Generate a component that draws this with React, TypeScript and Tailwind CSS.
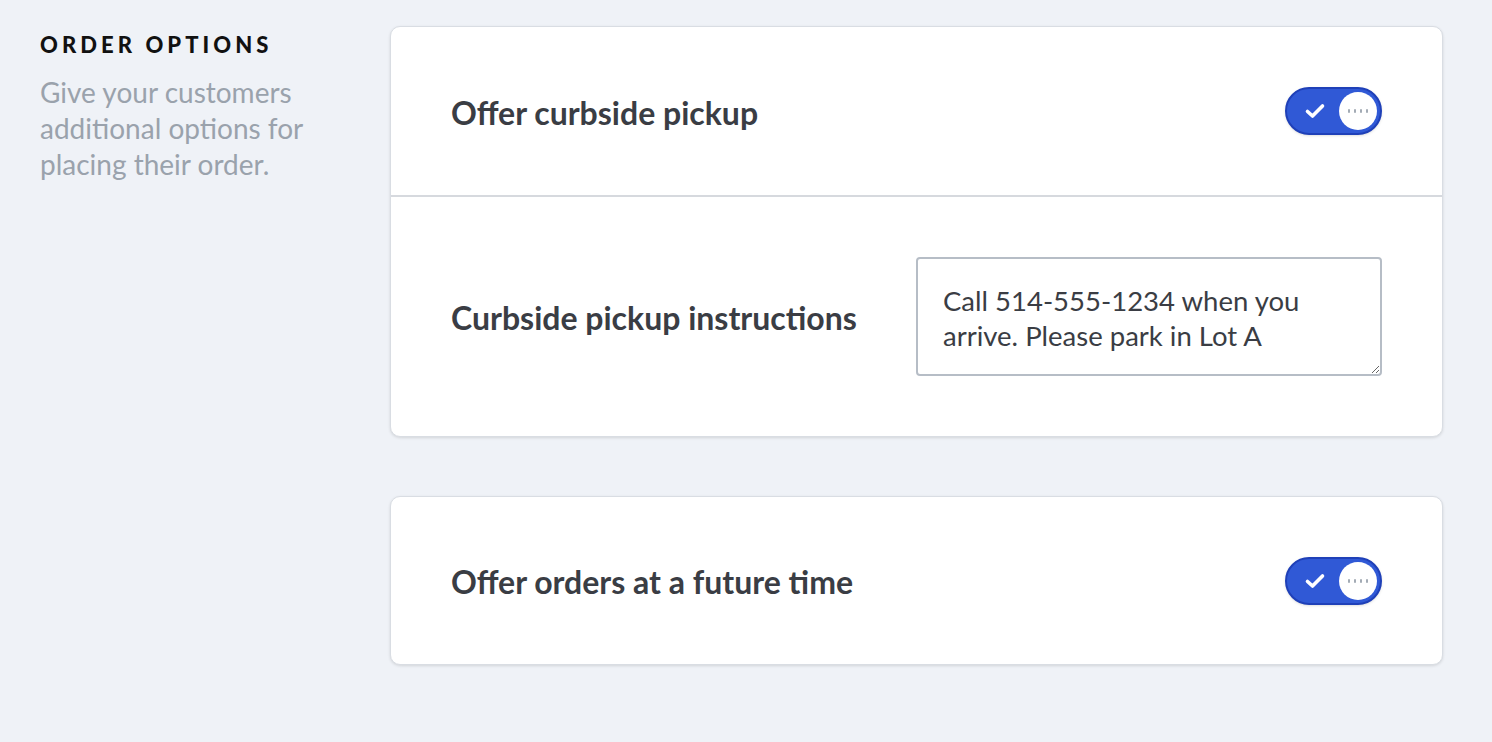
import React from "react"

function Toggle() {
  return (
    <button
      type="button"
      className="relative flex h-[48px] w-[97px] items-center rounded-full border-2 border-[#1f40b8] bg-[#3059d6] shadow-sm"
    >
      <svg
        className="absolute left-[17px] top-1/2 -translate-y-1/2"
        width="22"
        height="18"
        viewBox="0 0 22 18"
        fill="none"
      >
        <path
          d="M3.5 9.5l5 4.5L18.5 4"
          stroke="white"
          strokeWidth="3.6"
          strokeLinecap="round"
          strokeLinejoin="round"
        />
      </svg>
      <span className="absolute right-[3px] top-1/2 flex h-[38px] w-[38px] -translate-y-1/2 items-center justify-center gap-[4px] rounded-full bg-white">
        {[0, 1, 2, 3].map((i) => (
          <span key={i} className="h-[4px] w-[2px] rounded-full bg-[#a3abb5]" />
        ))}
      </span>
    </button>
  )
}

export default function App() {
  return (
    <div
      className="min-h-screen w-full bg-[#eff2f7] pl-[40px] pr-[49px] pt-[26px]"
      style={{ fontFamily: "Lato, 'Noto Sans', sans-serif" }}
    >
      <div className="flex">
        {/* Left column */}
        <div className="w-[350px] shrink-0 pr-8">
          <h2 className="mt-[8px] text-[22px] font-black leading-none tracking-[0.185em] text-[#111]">
            ORDER OPTIONS
          </h2>
          <p className="mt-[18px] text-[28px] leading-[36px] text-[#9aa2ac]">
            Give your customers additional options for placing their order.
          </p>
        </div>

        {/* Cards */}
        <div className="flex flex-1 flex-col gap-[59px]">
          <div className="rounded-[10px] border border-[#d9dde3] bg-white shadow-[0_1px_3px_rgba(0,0,0,0.12)]">
            <div className="flex h-[168px] items-center justify-between px-[60px]">
              <span className="pt-[3px] text-[32px] font-bold text-[#3a3d44]">Offer curbside pickup</span>
              <Toggle />
            </div>
            <div className="h-[2px] bg-[#d6d9de]" />
            <div className="flex h-[239px] items-center justify-between px-[60px]">
              <span className="pt-[3px] text-[32px] font-bold text-[#3a3d44]">Curbside pickup instructions</span>
              <textarea
                className="h-[119px] w-[466px] resize-y rounded-[4px] border-2 border-[#b6bdc6] px-[25px] py-[24px] text-[27.5px] leading-[35px] text-[#3a3d44] outline-none"
                defaultValue="Call 514-555-1234 when you arrive. Please park in Lot A"
              />
            </div>
          </div>

          <div className="rounded-[10px] border border-[#d9dde3] bg-white shadow-[0_1px_3px_rgba(0,0,0,0.12)]">
            <div className="flex h-[167px] items-center justify-between px-[60px]">
              <span className="pt-[3px] text-[32px] font-bold text-[#3a3d44]">Offer orders at a future time</span>
              <Toggle />
            </div>
          </div>
        </div>
      </div>
    </div>
  )
}
